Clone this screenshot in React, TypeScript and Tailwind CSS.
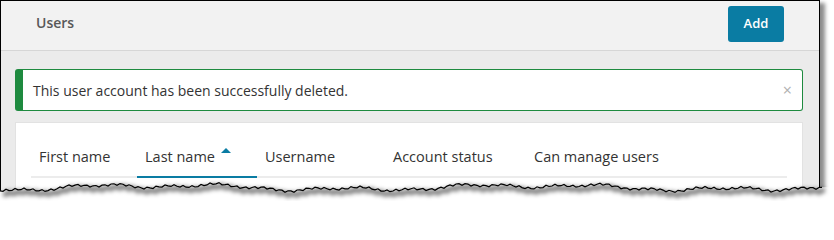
import React from 'react';

const columns = [
  { name: 'First name', width: 'w-[106px]' },
  { name: 'Last name', width: 'w-[120px]', active: true },
  { name: 'Username', width: 'w-[128px]' },
  { name: 'Account status', width: 'w-[141px]' },
  { name: 'Can manage users', width: 'flex-1' },
];

// jagged "torn paper" edge along the bottom of the screenshot
const tornPoints = () => {
  const pts: [number, number][] = [];
  for (let x = 0; x <= 822; x += 3) {
    const y =
      187.5 +
      Math.sin(x * 0.05) * 1.6 +
      Math.sin(x * 0.13 + 1.7) * 1.2 +
      Math.sin(x * 0.71 + 0.3) * 1.1 +
      Math.sin(x * 0.017 + 2) * 2;
    pts.push([x, Math.round(y * 10) / 10]);
  }
  return pts;
};

const TornEdge = () => {
  const pts = tornPoints();
  const line = pts.map(([x, y]) => `${x},${y}`).join(' ');
  const fill = `0,210 ${line} 834,${pts[pts.length - 1][1]} 834,210`;
  const shadow = pts.map(([x, y]) => `${x + 3},${y + 3}`).join(' ');
  return (
    <svg className="absolute left-0 top-0 pointer-events-none" width="834" height="210">
      <defs>
        <filter id="blur" x="-5%" y="-50%" width="110%" height="200%">
          <feGaussianBlur stdDeviation="2" />
        </filter>
      </defs>
      <polygon points={fill} fill="#ffffff" />
      <polyline points={shadow} fill="none" stroke="rgba(0,0,0,0.5)" strokeWidth="5" filter="url(#blur)" />
      <polyline points={line} fill="none" stroke="#000" strokeWidth="1.2" />
    </svg>
  );
};

const App = () => {
  return (
    <div className="relative w-[834px] h-[210px] bg-white overflow-hidden font-['Open_Sans',sans-serif]">
      <div className="w-[820px] h-[200px] border-l border-t border-r border-black shadow-[5px_3px_4px_rgba(0,0,0,0.45)] overflow-hidden bg-[#ebebeb]">
        {/* Header */}
        <div className="h-[50px] bg-[#f2f2f2] border-b border-[#d6d6d6] flex items-start justify-between pl-[35px] pr-[35px]">
          <h1 className="mt-[11px] text-[14px] font-semibold text-[#585858]">Users</h1>
          <button className="mt-[5px] w-[56px] h-[36px] rounded-[3px] bg-[#0a7ca3] text-white text-[13px] font-semibold">
            Add
          </button>
        </div>

        <div className="pl-[14px] pr-[16px] pt-[18px]">
          {/* Alert */}
          <div className="h-[42px] flex items-center bg-white border border-[#1e8a3f] border-l-[8px] rounded-[3px] pl-[10px] pr-[10px]">
            <span className="flex-1 text-[14px] text-[#333]">This user account has been successfully deleted.</span>
            <span className="text-[16px] leading-none text-[#b0b0b0]">×</span>
          </div>

          {/* Table card */}
          <div className="mt-[11px] bg-white border border-[#e2e2e2] px-[15px] pt-[14px] h-[100px]">
            <div className="flex border-b-2 border-[#ececec]">
              {columns.map((col) => (
                <div
                  key={col.name}
                  className={`${col.width} relative pl-[8px] pt-[10px] pb-[9px] text-[14.5px] leading-[20px] text-[#333] ${
                    col.active ? '-mb-[2px] border-b-2 border-[#0a7ca3]' : ''
                  }`}
                >
                  {col.name}
                  {col.active && (
                    <span className="absolute left-[84px] top-[11px] w-0 h-0 border-l-[5px] border-r-[5px] border-b-[5px] border-l-transparent border-r-transparent border-b-[#0a7ca3]" />
                  )}
                </div>
              ))}
            </div>
          </div>
        </div>
      </div>
      <TornEdge />
    </div>
  );
};

export default App;
